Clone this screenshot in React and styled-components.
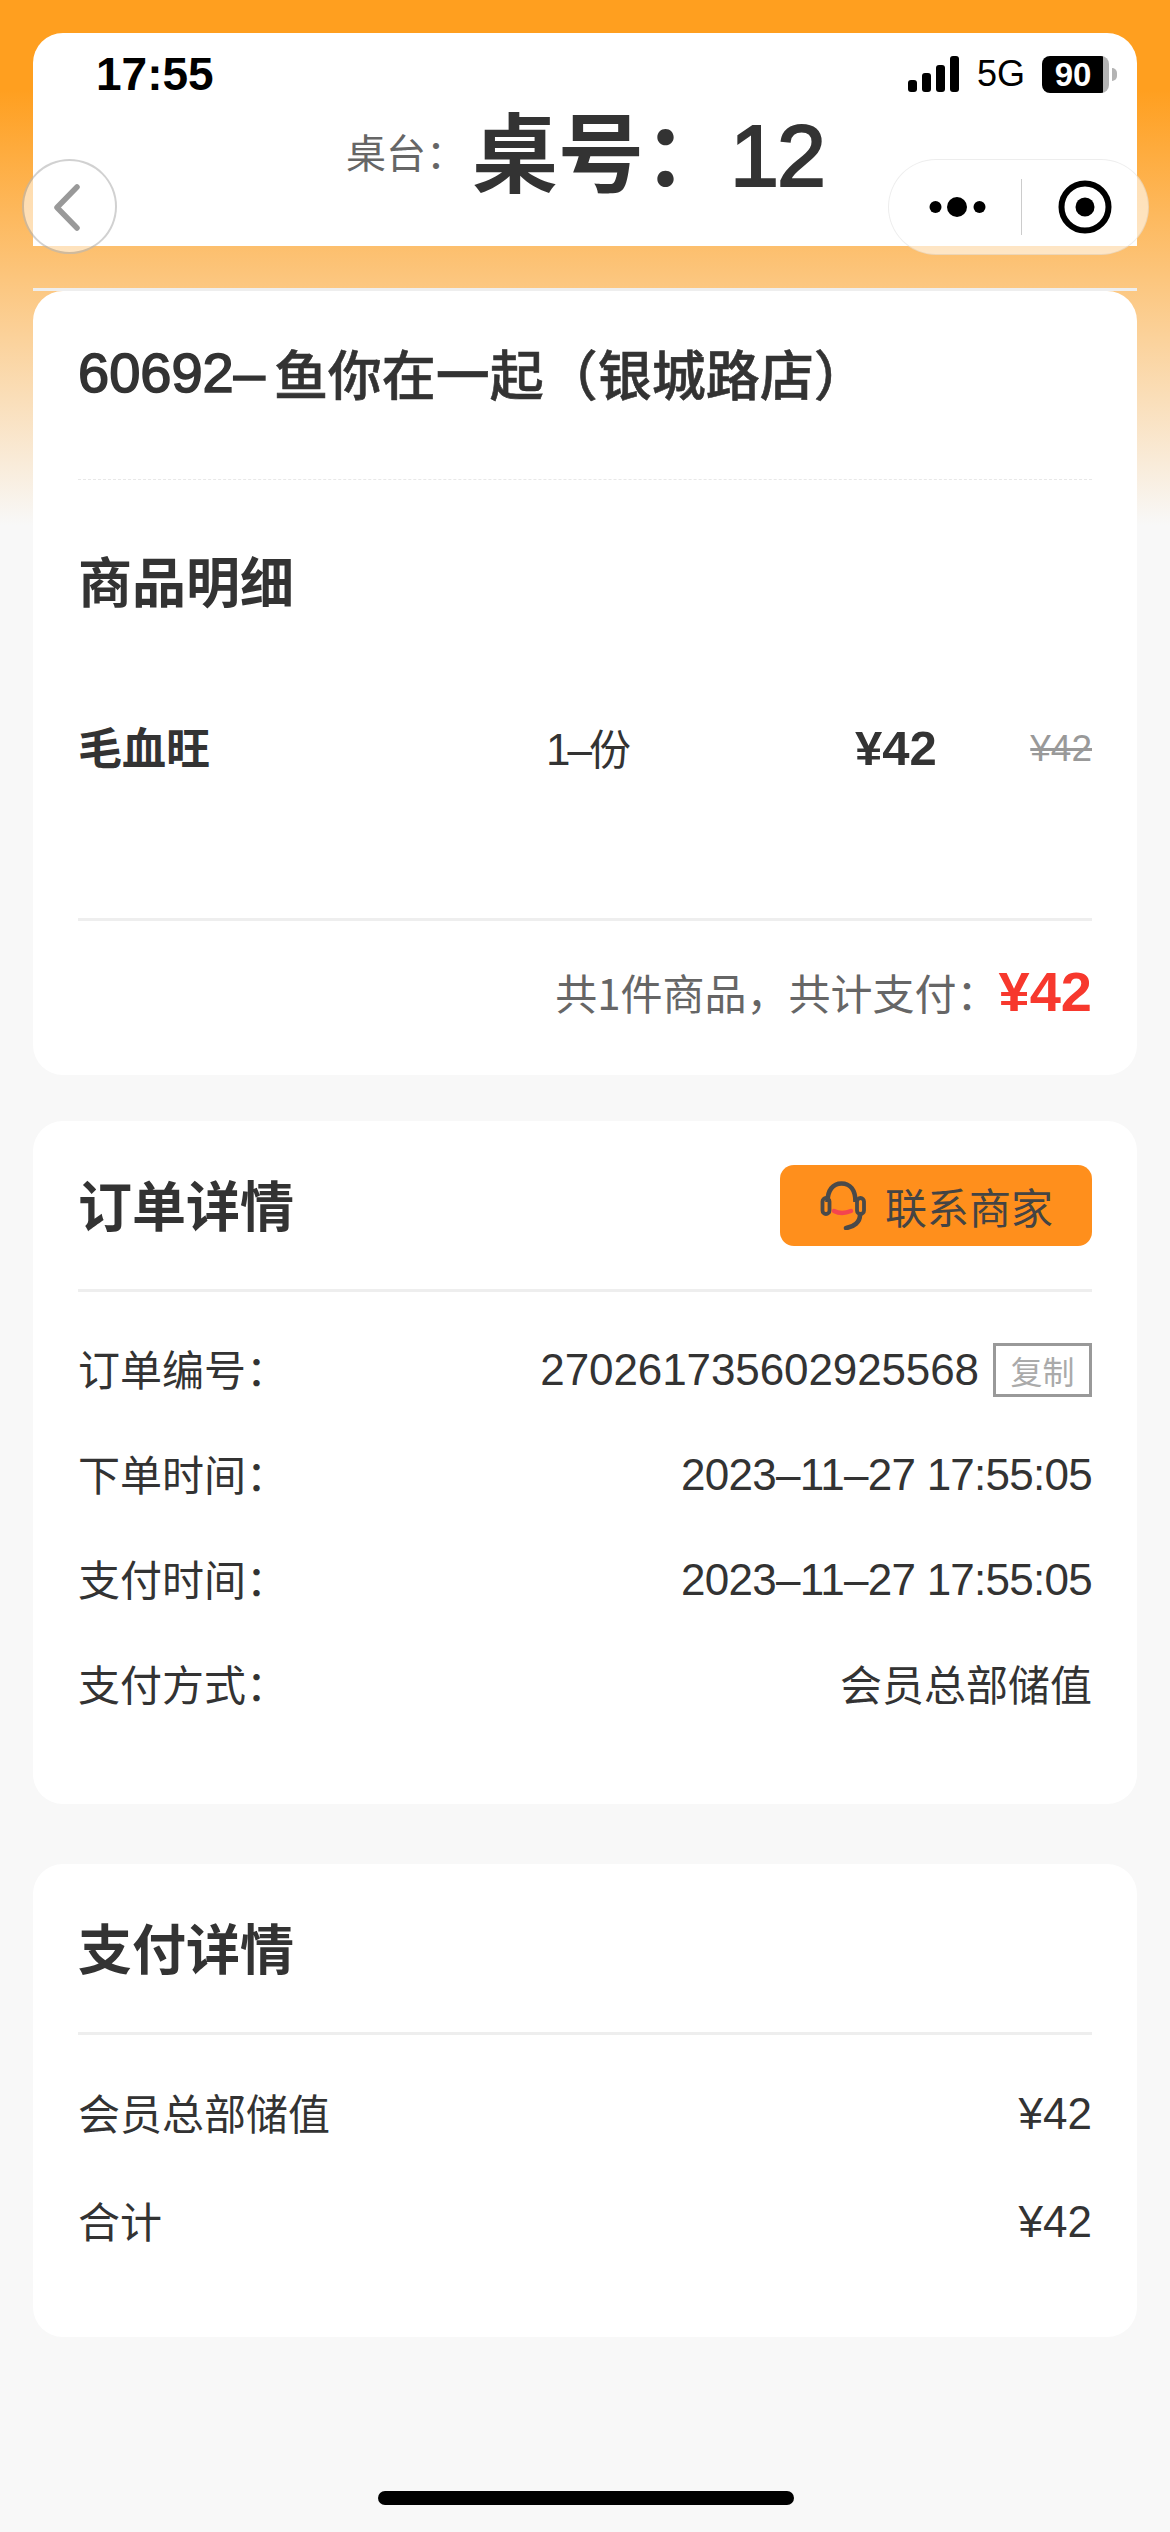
import React from "react";
import styled, { createGlobalStyle } from "styled-components";

const latin = `"Liberation Sans", "Noto Sans CJK SC", sans-serif`;
const cjk = `"Noto Sans CJK SC", "Liberation Sans", sans-serif`;

const GlobalStyle = createGlobalStyle`
  html, body {
    margin: 0;
    padding: 0;
    background: #f8f8f8;
  }
  * {
    box-sizing: border-box;
  }
`;

const Page = styled.div`
  position: relative;
  width: 1170px;
  height: 2532px;
  overflow: hidden;
  padding: 33px 33px 0;
  font-family: ${latin};
  color: #333;
  background: linear-gradient(#ff9f1f 0, #ff9f1f 90px, #f8f8f8 525px) no-repeat;
  background-size: 100% 525px;
`;

const StatusBar = styled.div`
  position: absolute;
  top: 48px;
  left: 96px;
  right: 33px;
  height: 52px;
  display: flex;
  align-items: center;
  justify-content: space-between;
  color: #000;
`;

const Clock = styled.span`
  font-size: 46px;
  font-weight: 700;
`;

const StatusIcons = styled.div`
  display: flex;
  align-items: center;
  gap: 17px;
  padding-right: 20px;
`;

const Network = styled.span`
  font-size: 36px;
`;

const Battery = styled.div`
  position: relative;
  width: 67px;
  height: 37px;
  border-radius: 8px;
  background: linear-gradient(90deg, #000 91%, #b3b3b3 91%);
  color: #fff;
  font-size: 33px;
  font-weight: 700;
  line-height: 38px;
  text-align: center;
  padding-right: 5px;
  margin-right: 8px;

  &::after {
    content: "";
    position: absolute;
    right: -8px;
    top: 12px;
    width: 5px;
    height: 13px;
    border-radius: 0 5px 5px 0;
    background: #b3b3b3;
  }
`;

const Header = styled.header`
  height: 213px;
  padding-top: 18px;
  display: flex;
  align-items: center;
  justify-content: center;
  gap: 6px;
  background: #fff;
  border-radius: 30px 30px 0 0;
`;

const TableLabel = styled.span`
  font-family: ${cjk};
  font-size: 40px;
  color: #666;
  margin-top: 4px;
`;

const TableNo = styled.span`
  font-family: ${cjk};
  font-size: 86px;
  font-weight: 700;
  color: #333;
  white-space: nowrap;
`;

const TableDigits = styled.span`
  font-family: ${latin};
  font-size: 88px;
  font-weight: 400;
  letter-spacing: -2px;
  -webkit-text-stroke: 2.2px #333;
`;

const HeaderRule = styled.div`
  height: 3px;
  margin-top: 42px;
  background: #eee;
`;

const BackButton = styled.div`
  position: absolute;
  left: 22px;
  top: 159px;
  width: 95px;
  height: 95px;
  border-radius: 50%;
  border: 2px solid rgba(0, 0, 0, 0.18);
  background: rgba(255, 255, 255, 0.55);
  display: flex;
  align-items: center;
  justify-content: center;
`;

const Capsule = styled.div`
  position: absolute;
  left: 888px;
  top: 159px;
  width: 261px;
  height: 96px;
  border-radius: 48px;
  border: 1.5px solid rgba(0, 0, 0, 0.07);
  background: rgba(255, 255, 255, 0.6);
  display: flex;
  align-items: center;
`;

const CapsuleSide = styled.div`
  flex: 1;
  display: flex;
  align-items: center;
  justify-content: center;
  padding-left: ${(p) => p.$pad || 0}px;
`;

const CapsuleRule = styled.div`
  width: 1.5px;
  height: 56px;
  background: #ccc;
`;

const Card = styled.section`
  background: #fff;
  border-radius: 30px;
  padding: 0 45px;
  margin-top: ${(p) => p.$top || 0}px;
  height: ${(p) => p.$height}px;
`;

const ShopName = styled.div`
  height: 189px;
  padding-bottom: 26px;
  display: flex;
  align-items: center;
  font-family: ${cjk};
  font-size: 54px;
  font-weight: 500;
  color: #333;
  border-bottom: 1.5px dashed #e8e8e8;
  -webkit-text-stroke: 0.6px #333;
`;

const ShopCode = styled.span`
  font-family: ${latin};
  font-size: 56px;
  -webkit-text-stroke: 1.6px #333;
  margin-right: 9px;
`;

const SectionTitle = styled.div`
  font-family: ${cjk};
  font-size: 54px;
  font-weight: 700;
  color: #333;
  padding-bottom: 3px;
`;

const GoodsTitle = styled(SectionTitle)`
  height: 208px;
  padding-bottom: 10px;
  display: flex;
  align-items: center;
`;

const GoodsRow = styled.div`
  display: grid;
  grid-template-columns: 468px 309px 1fr;
  align-items: center;
  height: 230px;
  padding-bottom: 114px;
`;

const GoodsName = styled.span`
  font-family: ${cjk};
  font-size: 44px;
  font-weight: 700;
`;

const GoodsQty = styled.span`
  font-family: ${cjk};
  font-size: 42px;
`;

const GoodsQtyNum = styled.span`
  font-family: ${latin};
  font-size: 44px;
  letter-spacing: -3px;
`;

const GoodsPrices = styled.div`
  display: flex;
  align-items: center;
  justify-content: space-between;
  padding-top: 3px;
`;

const Price = styled.span`
  font-size: 49px;
  font-weight: 700;
`;

const OldPrice = styled.span`
  font-size: 37px;
  color: #999;
  text-decoration: line-through;
  margin-top: 2px;
`;

const Rule = styled.div`
  height: 3px;
  background: #eee;
`;

const TotalRow = styled.div`
  margin-top: 38px;
  display: flex;
  align-items: center;
  justify-content: flex-end;
  height: 64px;
  font-family: ${cjk};
  font-size: 42px;
  color: #666;
`;

const TotalPrice = styled.span`
  font-family: ${latin};
  font-size: 56px;
  font-weight: 700;
  color: #f7382d;
`;

const CardHead = styled.div`
  height: 171px;
  display: flex;
  align-items: center;
  justify-content: space-between;
  border-bottom: 3px solid #eee;
`;

const ContactButton = styled.div`
  width: 312px;
  height: 81px;
  border-radius: 14px;
  background: #ff8f1c;
  display: flex;
  align-items: center;
  justify-content: center;
  gap: 16px;
  font-family: ${cjk};
  font-size: 42px;
  color: #444;
`;

const InfoList = styled.div`
  padding-top: 25px;
`;

const InfoRow = styled.div`
  height: ${(p) => p.$height || 105}px;
  display: flex;
  align-items: center;
  justify-content: space-between;
  font-family: ${cjk};
  font-size: 42px;
  color: #333;
`;

const Text = styled.span`
  padding-bottom: 5px;
`;

const Num = styled.span`
  font-family: ${latin};
  font-size: 44px;
  letter-spacing: ${(p) => p.$tight || 0}px;
`;

const InfoValue = styled.div`
  display: flex;
  align-items: center;
  gap: 14px;
`;

const CopyTag = styled.span`
  width: 99px;
  height: 54px;
  border: 3px solid #999;
  font-size: 32px;
  color: #aaa;
  display: flex;
  align-items: center;
  justify-content: center;
`;

const HomeBar = styled.div`
  position: absolute;
  left: 378px;
  top: 2491px;
  width: 416px;
  height: 14px;
  border-radius: 7px;
  background: #000;
`;

function SignalIcon() {
  return (
    <svg width="52" height="36" viewBox="0 0 52 36">
      <rect x="0" y="24" width="9" height="12" rx="3" fill="#000" />
      <rect x="14" y="17" width="9" height="19" rx="3" fill="#000" />
      <rect x="28" y="9" width="9" height="27" rx="3" fill="#000" />
      <rect x="42" y="0" width="9" height="36" rx="3" fill="#000" />
    </svg>
  );
}

function HeadsetIcon() {
  return (
    <svg width="50" height="50" viewBox="5 5 50 50" fill="none">
      <path d="M13.5 27C13.5 15 19 8.5 27.5 8.5S41.5 15 41.5 27" stroke="#4a4a4a" strokeWidth="4.6" />
      <rect x="8.5" y="23" width="7" height="16" rx="3.5" stroke="#4a4a4a" strokeWidth="3.8" />
      <rect x="43" y="23" width="7" height="16" rx="3.5" stroke="#4a4a4a" strokeWidth="3.8" />
      <path d="M46 40c0 7-6 12-14 13" stroke="#4a4a4a" strokeWidth="4.6" strokeLinecap="round" />
      <path d="M20 36c5 2.500 11 2.500 17 0" stroke="#f4454f" strokeWidth="4.5" strokeLinecap="round" />
    </svg>
  );
}

export default function App() {
  return (
    <>
      <GlobalStyle />
      <Page>
        <Header>
          <TableLabel>桌台：</TableLabel>
          <TableNo>
            桌号：<TableDigits>12</TableDigits>
          </TableNo>
        </Header>
        <HeaderRule />

        <Card $height={784}>
          <ShopName>
            <ShopCode>60692–</ShopCode>鱼你在一起（银城路店）
          </ShopName>
          <GoodsTitle>商品明细</GoodsTitle>
          <GoodsRow>
            <GoodsName>毛血旺</GoodsName>
            <GoodsQty>
              <GoodsQtyNum>1–</GoodsQtyNum>份
            </GoodsQty>
            <GoodsPrices>
              <Price>¥42</Price>
              <OldPrice>¥42</OldPrice>
            </GoodsPrices>
          </GoodsRow>
          <Rule />
          <TotalRow>
            <span>共1件商品，共计支付：</span>
            <TotalPrice>¥42</TotalPrice>
          </TotalRow>
        </Card>

        <Card $top={46} $height={683}>
          <CardHead>
            <SectionTitle>订单详情</SectionTitle>
            <ContactButton>
              <HeadsetIcon />
              <span>联系商家</span>
            </ContactButton>
          </CardHead>
          <InfoList>
            <InfoRow>
              <Text>订单编号：</Text>
              <InfoValue>
                <Num $tight={-0.1}>270261735602925568</Num>
                <CopyTag>复制</CopyTag>
              </InfoValue>
            </InfoRow>
            <InfoRow>
              <Text>下单时间：</Text>
              <Num $tight={-0.74}>2023–11–27 17:55:05</Num>
            </InfoRow>
            <InfoRow>
              <Text>支付时间：</Text>
              <Num $tight={-0.74}>2023–11–27 17:55:05</Num>
            </InfoRow>
            <InfoRow>
              <Text>支付方式：</Text>
              <Text>会员总部储值</Text>
            </InfoRow>
          </InfoList>
        </Card>

        <Card $top={60} $height={473}>
          <CardHead>
            <SectionTitle>支付详情</SectionTitle>
          </CardHead>
          <InfoList>
            <InfoRow $height={108}>
              <Text>会员总部储值</Text>
              <Num>¥42</Num>
            </InfoRow>
            <InfoRow $height={108}>
              <Text>合计</Text>
              <Num>¥42</Num>
            </InfoRow>
          </InfoList>
        </Card>

        <StatusBar>
          <Clock>17:55</Clock>
          <StatusIcons>
            <SignalIcon />
            <Network>5G</Network>
            <Battery>90</Battery>
          </StatusIcons>
        </StatusBar>

        <BackButton>
          <svg width="36" height="52" viewBox="0 0 36 52" fill="none">
            <path d="M25 6 5 26.500 25 47" stroke="#999" strokeWidth="5.5" strokeLinecap="round" strokeLinejoin="round" />
          </svg>
        </BackButton>

        <Capsule>
          <CapsuleSide $pad={6}>
            <svg width="58" height="22" viewBox="0 0 58 22">
              <circle cx="6.5" cy="11" r="6" fill="#000" />
              <circle cx="28" cy="11" r="10" fill="#000" />
              <circle cx="50.5" cy="11" r="6" fill="#000" />
            </svg>
          </CapsuleSide>
          <CapsuleRule />
          <CapsuleSide>
            <svg width="54" height="54" viewBox="0 0 54 54" fill="none">
              <circle cx="27" cy="27" r="23.5" stroke="#000" strokeWidth="6" />
              <circle cx="27" cy="27" r="9.5" fill="#000" />
            </svg>
          </CapsuleSide>
        </Capsule>

        <HomeBar />
      </Page>
    </>
  );
}
